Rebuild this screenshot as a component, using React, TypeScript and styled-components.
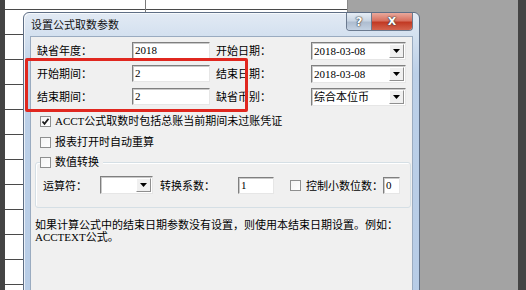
import React from "react";
import styled, { createGlobalStyle } from "styled-components";

const GlobalStyle = createGlobalStyle`
  html, body {
    margin: 0;
    padding: 0;
    background: #a3a3a3;
  }
  body {
    font-family: "Liberation Serif", "Noto Sans CJK SC", serif;
    font-size: 11px;
    color: #000;
  }
`;

const Desktop = styled.div`
  position: relative;
  width: 526px;
  height: 290px;
  overflow: hidden;
  display: flex;
`;

const EdgeStrip = styled.div<{ $w: number }>`
  width: ${(p) => p.$w}px;
  flex-shrink: 0;
  background: #444;
`;

const Sheet = styled.div`
  width: 342px;
  flex-shrink: 0;
  background-color: #fff;
  border-right: 1px solid #8a8a8a;
  background-image:
    linear-gradient(#7a7a7a, #7a7a7a),
    repeating-linear-gradient(to bottom, transparent 0 9px, #4a4a4a 9px 10px, transparent 10px 25px);
  background-repeat: no-repeat, repeat;
  background-size: 1px 12px, auto;
  background-position: 140px 0, 0 0;
`;

const Backdrop = styled.div`
  flex: 1;
  background: #a3a3a3;
`;

const Dialog = styled.div`
  position: absolute;
  left: 23px;
  top: 12px;
  width: 397px;
  height: 300px;
  box-sizing: border-box;
  border: 1px solid #5e6e85;
  border-radius: 6px 6px 0 0;
  background: linear-gradient(to bottom, #e2eaf4 0px, #d3e0ef 24px, #bcd0e8 60px, #b7cce6 100%);
  box-shadow: inset 1px 1px 0 rgba(255, 255, 255, 0.7);
  display: flex;
  flex-direction: column;
`;

const TitleBar = styled.div`
  height: 23px;
  display: flex;
  align-items: flex-start;
  padding: 0 6px 0 7px;
`;

const TitleText = styled.div`
  flex: 1;
  padding-top: 4px;
  line-height: 14px;
  font-family: "Noto Sans CJK SC", sans-serif;
  color: #111;
`;

const CaptionButtons = styled.div`
  display: flex;
  border: 1px solid #6b7a8f;
  border-top: none;
  border-radius: 0 0 4px 4px;
  overflow: hidden;
`;

const CaptionButton = styled.div<{ $kind: "help" | "close" }>`
  width: ${(p) => (p.$kind === "close" ? 40 : 24)}px;
  height: 17px;
  display: flex;
  align-items: center;
  justify-content: center;
  font-family: "DejaVu Sans", sans-serif;
  font-weight: bold;
  font-size: ${(p) => (p.$kind === "close" ? 11 : 12)}px;
  color: #fff;
  text-shadow: 0 0 1px #3a3a3a, 0 0 1px #3a3a3a, 0 0 2px #555;
  background: ${(p) =>
    p.$kind === "close"
      ? "linear-gradient(to bottom, #e9a99c 0%, #d8705f 45%, #c23a24 55%, #d4634d 100%)"
      : "linear-gradient(to bottom, #e6edf5 0%, #c9d5e3 45%, #aebdd0 55%, #c3d1e2 100%)"};
  & + & {
    border-left: 1px solid #6b7a8f;
  }
`;

const Client = styled.div`
  flex: 1;
  margin: 0 6px 0 6px;
  border: 1px solid #9aabc0;
  background: #f0f0f0;
  padding: 5px 0 0 4px;
  display: flex;
  flex-direction: column;
`;

const FieldGrid = styled.div`
  margin-left: 2px;
  display: grid;
  grid-template-columns: 95px 78px 101px 95px;
  grid-auto-rows: 17px;
  row-gap: 6px;
  align-items: center;
`;

const FieldLabel = styled.div<{ $indent?: number }>`
  padding-left: ${(p) => p.$indent ?? 0}px;
  white-space: nowrap;
  font-family: "Noto Sans CJK SC", sans-serif;
  line-height: 17px;
`;

const sunken = `
  box-sizing: border-box;
  background: #fff;
  border: 1px solid;
  border-color: #7f7f7f #e6e6e6 #e6e6e6 #7f7f7f;
  box-shadow: inset 1px 1px 0 #c9c9c9;
`;

const TextBox = styled.div<{ $w?: number }>`
  ${sunken}
  width: ${(p) => (p.$w ? `${p.$w}px` : "100%")};
  height: 17px;
  padding: 0 2px;
  line-height: 15px;
  white-space: nowrap;
`;

const ComboBox = styled.div<{ $w?: number }>`
  ${sunken}
  width: ${(p) => (p.$w ? `${p.$w}px` : "100%")};
  height: 18px;
  display: flex;
  align-items: stretch;
  padding: 1px;
`;

const ComboText = styled.div`
  flex: 1;
  padding-left: 1px;
  line-height: 14px;
  white-space: nowrap;
  font-family: "Liberation Serif", "Noto Sans CJK SC", serif;
`;

const ComboArrow = styled.div`
  width: 15px;
  box-sizing: border-box;
  background: #f0f0f0;
  border: 1px solid;
  border-color: #fff #8f8f8f #8f8f8f #fff;
  display: flex;
  align-items: center;
  justify-content: center;
`;

const CheckRow = styled.div<{ $top: number }>`
  margin-top: ${(p) => p.$top}px;
  padding-left: 5px;
  height: 16px;
  display: flex;
  align-items: center;
  gap: 4px;
  white-space: nowrap;
`;

const CheckBox = styled.span`
  width: 11px;
  height: 11px;
  flex-shrink: 0;
  box-sizing: border-box;
  border: 1px solid #8e8f8f;
  background: linear-gradient(135deg, #f4f4f4, #fff);
  display: inline-flex;
  align-items: center;
  justify-content: center;
`;

const CheckText = styled.span`
  font-family: "Liberation Serif", "Noto Sans CJK SC", serif;
  line-height: 16px;
`;

const Group = styled.fieldset`
  margin: 4px 0 0 0;
  width: 376px;
  box-sizing: border-box;
  border: 1px solid #d5dfe5;
  border-radius: 3px;
  padding: 6px 0 13px 4px;
  box-shadow: inset 1px 1px 0 #fff;
`;

const GroupLegend = styled.legend`
  padding: 0 4px 0 0;
  height: 16px;
  display: flex;
  align-items: center;
  gap: 4px;
  background: #f0f0f0;
`;

const GroupRow = styled.div`
  margin-left: 3px;
  height: 18px;
  display: flex;
  align-items: center;
`;

const RowLabel = styled.div<{ $w: number }>`
  width: ${(p) => p.$w}px;
  flex-shrink: 0;
  white-space: nowrap;
  font-family: "Noto Sans CJK SC", sans-serif;
`;

const Spacer = styled.div<{ $w: number }>`
  width: ${(p) => p.$w}px;
  flex-shrink: 0;
`;

const Note = styled.p`
  margin: 11px 0 0 0;
  line-height: 12px;
  white-space: nowrap;
  font-family: "Liberation Serif", "Noto Sans CJK SC", serif;
`;

const Highlight = styled.div`
  position: absolute;
  left: 25px;
  top: 58px;
  width: 223px;
  height: 54px;
  box-sizing: border-box;
  border: 3px solid #e0271f;
  border-radius: 2px;
  pointer-events: none;
`;

const Arrow = () => (
  <svg width="7" height="4" viewBox="0 0 7 4">
    <polygon points="0,0 7,0 3.5,4" fill="#000" />
  </svg>
);

const Tick = () => (
  <svg width="9" height="9" viewBox="0 0 9 9">
    <polyline points="1.5,4.5 3.5,6.8 7.5,1.8" fill="none" stroke="#1a1a1a" strokeWidth="1.8" />
  </svg>
);

const Combo = ({ value, w }: { value?: string; w?: number }) => (
  <ComboBox $w={w}>
    <ComboText>{value}</ComboText>
    <ComboArrow>
      <Arrow />
    </ComboArrow>
  </ComboBox>
);

const fields = [
  { label: "缺省年度：", value: "2018", label2: "开始日期：", value2: "2018-03-08" },
  { label: "开始期间：", value: "2", label2: "结束日期：", value2: "2018-03-08" },
  { label: "结束期间：", value: "2", label2: "缺省币别：", value2: "综合本位币" },
];

export default function App() {
  return (
    <>
      <GlobalStyle />
      <Desktop>
        <EdgeStrip $w={5} />
        <Sheet />
        <Backdrop />
        <EdgeStrip $w={8} />

        <Dialog>
          <TitleBar>
            <TitleText>设置公式取数参数</TitleText>
            <CaptionButtons>
              <CaptionButton $kind="help">?</CaptionButton>
              <CaptionButton $kind="close">X</CaptionButton>
            </CaptionButtons>
          </TitleBar>
          <Client>
            <FieldGrid>
              {fields.map((f) => (
                <React.Fragment key={f.label}>
                  <FieldLabel>{f.label}</FieldLabel>
                  <TextBox>{f.value}</TextBox>
                  <FieldLabel $indent={6}>{f.label2}</FieldLabel>
                  <Combo value={f.value2} />
                </React.Fragment>
              ))}
            </FieldGrid>

            <CheckRow $top={8}>
              <CheckBox>
                <Tick />
              </CheckBox>
              <CheckText>ACCT公式取数时包括总账当前期间未过账凭证</CheckText>
            </CheckRow>
            <CheckRow $top={5}>
              <CheckBox />
              <CheckText>报表打开时自动重算</CheckText>
            </CheckRow>

            <Group>
              <GroupLegend>
                <CheckBox />
                <CheckText>数值转换</CheckText>
              </GroupLegend>
              <GroupRow>
                <RowLabel $w={57}>运算符：</RowLabel>
                <Combo w={53} />
                <Spacer $w={7} />
                <RowLabel $w={78}>转换系数：</RowLabel>
                <TextBox $w={36}>1</TextBox>
                <Spacer $w={16} />
                <CheckBox />
                <Spacer $w={5} />
                <RowLabel $w={77}>控制小数位数：</RowLabel>
                <TextBox $w={17}>0</TextBox>
              </GroupRow>
            </Group>

            <Note>
              如果计算公式中的结束日期参数没有设置，则使用本结束日期设置。例如：
              <br />
              ACCTEXT公式。
            </Note>
          </Client>
        </Dialog>

        <Highlight />
      </Desktop>
    </>
  );
}
